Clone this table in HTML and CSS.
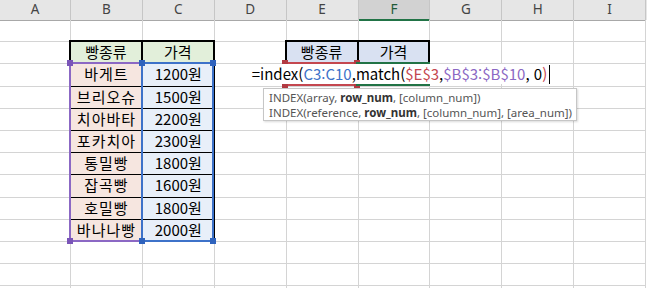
FILE: index.html
```html
<!DOCTYPE html>
<html lang="ko">
<head>
  <meta charset="UTF-8">
  <title>빵 가격표</title>
  <link rel="stylesheet" href="styles.css">
</head>
<body>
  <div class="sheet">
    <div class="heads">
      <div class="head">A</div>
      <div class="head">B</div>
      <div class="head">C</div>
      <div class="head">D</div>
      <div class="head">E</div>
      <div class="head selected">F</div>
      <div class="head">G</div>
      <div class="head">H</div>
      <div class="head">I</div>
    </div>

    <!-- row 1 -->
    <div class="row">
      <div class="cell"></div><div class="cell"></div><div class="cell"></div>
      <div class="cell"></div><div class="cell"></div><div class="cell"></div>
      <div class="cell"></div><div class="cell"></div><div class="cell"></div>
    </div>

    <!-- row 2: table headers -->
    <div class="row">
      <div class="cell"></div>
      <div class="cell th">빵종류</div>
      <div class="cell th">가격</div>
      <div class="cell"></div>
      <div class="cell th2">빵종류</div>
      <div class="cell th2">가격</div>
      <div class="cell"></div><div class="cell"></div><div class="cell"></div>
    </div>

    <div class="row">
      <div class="cell"></div>
      <div class="cell td-name">바게트</div>
      <div class="cell td-price">1200원</div>
      <div class="cell"></div><div class="cell"></div><div class="cell"></div>
      <div class="cell"></div><div class="cell"></div><div class="cell"></div>
    </div>
    <div class="row">
      <div class="cell"></div>
      <div class="cell td-name">브리오슈</div>
      <div class="cell td-price">1500원</div>
      <div class="cell"></div><div class="cell"></div><div class="cell"></div>
      <div class="cell"></div><div class="cell"></div><div class="cell"></div>
    </div>
    <div class="row">
      <div class="cell"></div>
      <div class="cell td-name">치아바타</div>
      <div class="cell td-price">2200원</div>
      <div class="cell"></div><div class="cell"></div><div class="cell"></div>
      <div class="cell"></div><div class="cell"></div><div class="cell"></div>
    </div>
    <div class="row">
      <div class="cell"></div>
      <div class="cell td-name">포카치아</div>
      <div class="cell td-price">2300원</div>
      <div class="cell"></div><div class="cell"></div><div class="cell"></div>
      <div class="cell"></div><div class="cell"></div><div class="cell"></div>
    </div>
    <div class="row">
      <div class="cell"></div>
      <div class="cell td-name">통밀빵</div>
      <div class="cell td-price">1800원</div>
      <div class="cell"></div><div class="cell"></div><div class="cell"></div>
      <div class="cell"></div><div class="cell"></div><div class="cell"></div>
    </div>
    <div class="row">
      <div class="cell"></div>
      <div class="cell td-name">잡곡빵</div>
      <div class="cell td-price">1600원</div>
      <div class="cell"></div><div class="cell"></div><div class="cell"></div>
      <div class="cell"></div><div class="cell"></div><div class="cell"></div>
    </div>
    <div class="row">
      <div class="cell"></div>
      <div class="cell td-name">호밀빵</div>
      <div class="cell td-price">1800원</div>
      <div class="cell"></div><div class="cell"></div><div class="cell"></div>
      <div class="cell"></div><div class="cell"></div><div class="cell"></div>
    </div>
    <div class="row">
      <div class="cell"></div>
      <div class="cell td-name">바나나빵</div>
      <div class="cell td-price">2000원</div>
      <div class="cell"></div><div class="cell"></div><div class="cell"></div>
      <div class="cell"></div><div class="cell"></div><div class="cell"></div>
    </div>

    <div class="row">
      <div class="cell"></div><div class="cell"></div><div class="cell"></div>
      <div class="cell"></div><div class="cell"></div><div class="cell"></div>
      <div class="cell"></div><div class="cell"></div><div class="cell"></div>
    </div>
    <div class="row">
      <div class="cell"></div><div class="cell"></div><div class="cell"></div>
      <div class="cell"></div><div class="cell"></div><div class="cell"></div>
      <div class="cell"></div><div class="cell"></div><div class="cell"></div>
    </div>
    <div class="row">
      <div class="cell"></div><div class="cell"></div><div class="cell"></div>
      <div class="cell"></div><div class="cell"></div><div class="cell"></div>
      <div class="cell"></div><div class="cell"></div><div class="cell"></div>
    </div>

    <!-- formula reference highlights -->
    <div class="range range-purple range-names">
      <span class="handle tl"></span><span class="handle tr"></span>
      <span class="handle bl"></span><span class="handle br"></span>
    </div>
    <div class="range range-blue range-prices">
      <span class="handle tl"></span><span class="handle tr"></span>
      <span class="handle bl"></span><span class="handle br"></span>
    </div>
    <div class="range range-red range-key">
      <span class="handle tl"></span><span class="handle tr"></span>
      <span class="handle bl"></span><span class="handle br"></span>
    </div>
    <div class="range range-green range-active"></div>

    <!-- in-cell editor -->
    <div class="editor">=index(<span class="ref-blue">C3:C10</span>,match(<span class="ref-red">$E$3</span>,<span class="ref-purple">$B$3:$B$10</span>, 0<span class="ref-red">)</span><span class="caret"></span></div>

    <div class="tooltip">
      <div>INDEX(array, <b>row_num</b>, [column_num])</div>
      <div>INDEX(reference, <b>row_num</b>, [column_num], [area_num])</div>
    </div>
  </div>
</body>
</html>
```

FILE: styles.css
```css
* {
  margin: 0;
  padding: 0;
  box-sizing: border-box;
}

body {
  width: 647px;
  height: 288px;
  overflow: hidden;
  background: #fff;
  font-family: "Noto Sans CJK KR", "Noto Sans", sans-serif;
  color: #000;
}

.sheet {
  position: relative;
  height: 288px;
  overflow: hidden;
}

.heads,
.row {
  display: grid;
  grid-template-columns: 71px repeat(8, 71.875px);
}

.heads {
  height: 20px;
  background: #e6e6e6;
}

.head {
  border-right: 1px solid #c6c6c6;
  border-bottom: 1px solid #a8a8a8;
  font: 13.5px "Noto Sans", sans-serif;
  color: #444;
  text-align: center;
  line-height: 19px;
}

.head.selected {
  background: #d2d2d2;
  border-bottom: 2px solid #217346;
  color: #1f5a38;
}

.row {
  height: 22.2px;
}

.cell {
  border-right: 1px solid #d4d4d4;
  border-bottom: 1px solid #d4d4d4;
  font-size: 15px;
  line-height: 20px;
  text-align: center;
  white-space: nowrap;
}

.th,
.th2 {
  margin: -2px 0 0 -2px;
  border: 2px solid #000;
  line-height: 20px;
}

.th {
  background: #e2efda;
}

.th2 {
  background: #d9e1f2;
}

.th2 + .th2 {
  margin-left: -1px;
  border-left-width: 1px;
}

.td-name,
.td-price {
  border-right-color: #000;
  border-bottom-color: #000;
}

.td-name {
  background: #f6e6e0;
  letter-spacing: 1px;
}

.td-price {
  background: #e8eff9;
}

/* reference boxes drawn over the grid while editing */
.range {
  position: absolute;
  border: 2px solid;
}

.range-purple { border-color: #8b68c4; }
.range-blue { border-color: #3d72c9; }
.range-red { border-color: #c4474f; }
.range-green { border-color: #217346; }

.range-names { left: 69px; top: 62px; width: 74px; height: 180px; }
.range-prices { left: 141px; top: 62px; width: 73px; height: 180px; }
.range-key { left: 284px; top: 62px; width: 74px; height: 24px; }
.range-active { left: 356px; top: 62px; width: 74px; height: 24px; }

.handle {
  position: absolute;
  width: 6px;
  height: 6px;
}

.range-purple .handle { background: #7a55b8; }
.range-blue .handle { background: #2f63bd; }
.range-red .handle { background: #b23a42; }

.handle.tl { left: -4px; top: -4px; }
.handle.tr { right: -4px; top: -4px; }
.handle.bl { left: -4px; bottom: -4px; }
.handle.br { right: -4px; bottom: -4px; }

.editor {
  position: absolute;
  left: 248px;
  top: 64px;
  width: 306px;
  height: 20px;
  background: #fff;
  font-size: 15px;
  line-height: 20px;
  text-align: center;
  white-space: nowrap;
}

.ref-blue { color: #3d72c9; }
.ref-red { color: #c4474f; }
.ref-purple { color: #8b68c4; }

.caret {
  display: inline-block;
  width: 1px;
  height: 19px;
  margin-left: 2px;
  vertical-align: -4px;
  background: #000;
}

.tooltip {
  position: absolute;
  left: 263px;
  top: 88px;
  width: 314px;
  height: 33px;
  padding: 1px 0 0 5px;
  background: #fff;
  border: 1px solid #c6c6c6;
  box-shadow: 1px 1px 2px rgba(0, 0, 0, 0.15);
  font: 11.5px "Noto Sans", sans-serif;
  line-height: 15px;
  color: #555;
  white-space: nowrap;
}

.tooltip b {
  color: #333;
}
```
